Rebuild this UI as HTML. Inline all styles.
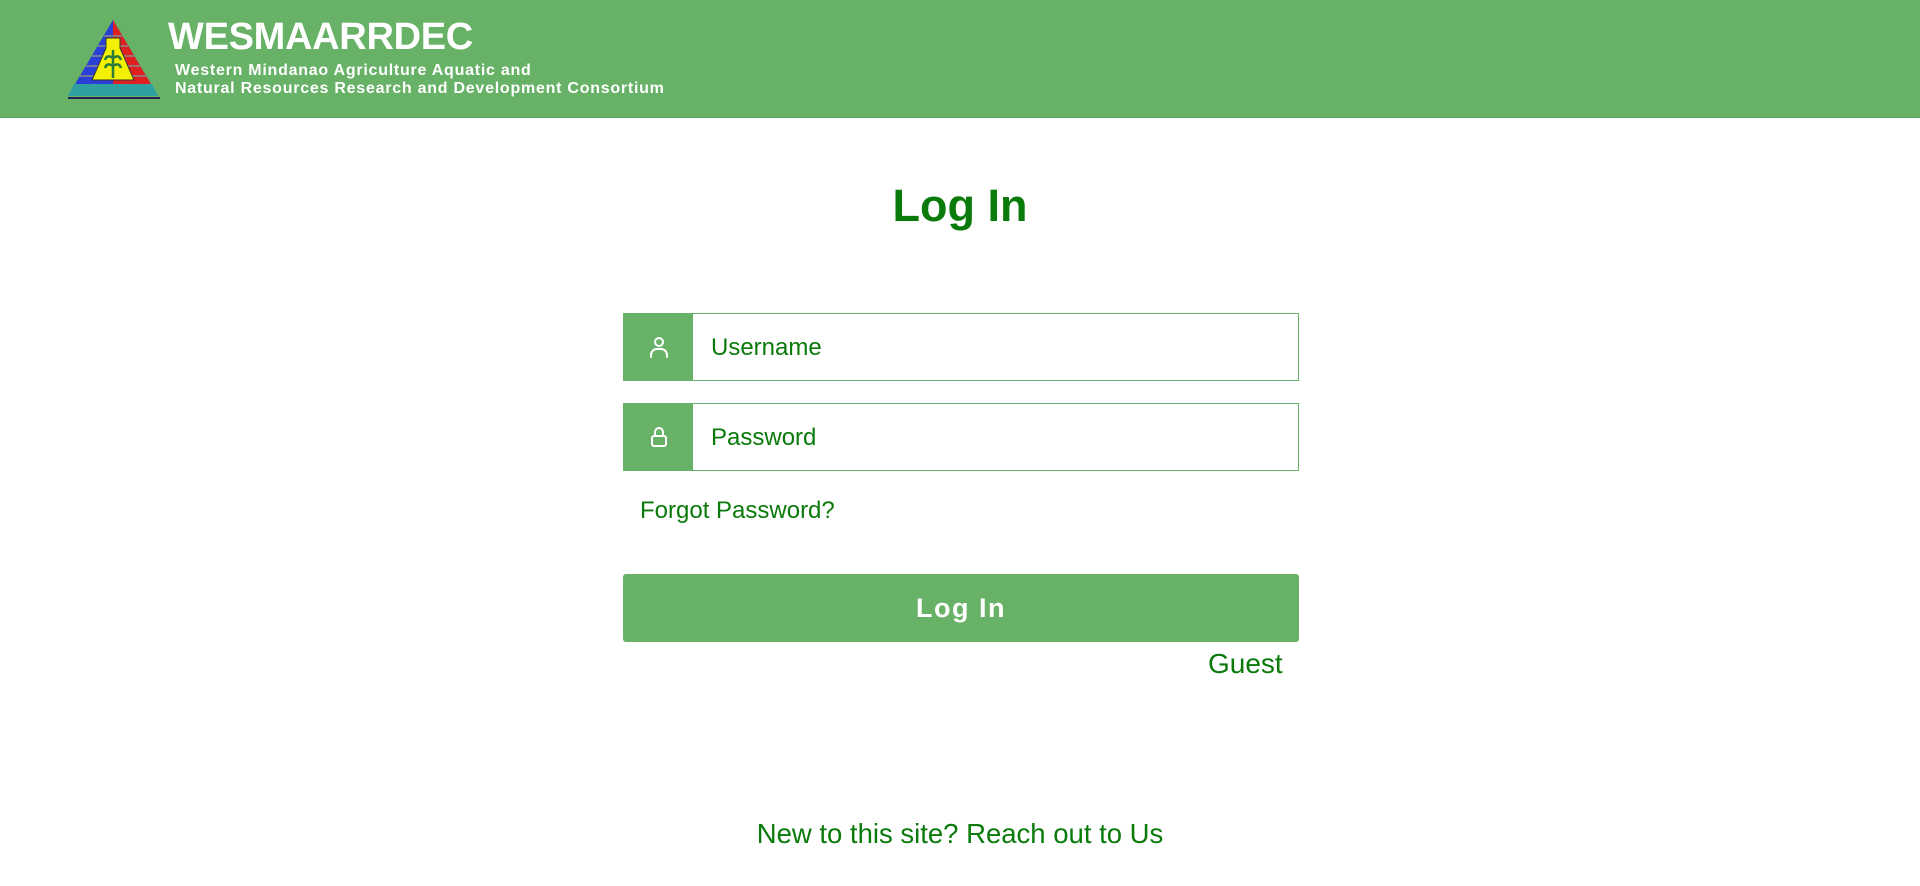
<!DOCTYPE html>
<html><head><meta charset="utf-8"><style>
body{margin:0;width:1920px;height:886px;background:#fff;font-family:"Liberation Sans",Arial,sans-serif;overflow:hidden;position:relative}
.hdr{position:absolute;left:0;top:0;width:1920px;height:117px;background:#67b267;border-bottom:1px solid #5aa55a}
.t{position:absolute;color:#fff;font-weight:bold;white-space:nowrap}
.g{color:#0a7a0a}
.inp{position:absolute;left:623px;width:674px;height:66px;border:1px solid #67b267;background:#fff}
.ico{position:absolute;left:0;top:0;width:69px;height:66px;background:#67b267}
.ph{position:absolute;left:87px;top:20px;font-size:24px;color:#0a7a0a}
</style></head><body>
<div class="hdr">
<svg style="position:absolute;left:66px;top:18px" width="96" height="82" viewBox="0 0 96 82">
<polygon points="47,2 2,78 92,78" fill="#2a3fd8"/>
<polygon points="47,2 92,78 47,78" fill="#e02020"/>
<g stroke="#8a8a8a" stroke-width="1.5">
<line x1="38" y1="18" x2="56" y2="18"/><line x1="32" y1="28" x2="62" y2="28"/><line x1="26" y1="38" x2="68" y2="38"/><line x1="20" y1="48" x2="74" y2="48"/><line x1="14" y1="58" x2="80" y2="58"/></g>
<polygon points="40,20 54,20 54,30 68,62 26,62 40,30" fill="#f3f000" stroke="#333" stroke-width="1"/>
<path d="M47,60 V32 M47,40 q-6,-4 -8,2 M47,40 q6,-4 8,2 M47,48 q-6,-4 -8,2 M47,48 q6,-4 8,2" stroke="#2a7a3a" stroke-width="2.5" fill="none"/>
<polygon points="2,78 8,66 86,66 92,78" fill="#2fa0a0"/>
<path d="M2,80 H94" stroke="#225" stroke-width="2"/>
</svg>
<div class="t" style="left:168px;top:16px;font-size:38px;letter-spacing:-0.3px">WESMAARRDEC</div>
<div class="t" style="left:175px;top:62px;font-size:16px;line-height:18px;letter-spacing:0.75px">Western Mindanao Agriculture Aquatic and<br>Natural Resources Research and Development Consortium</div>
</div>
<div class="g" style="position:absolute;left:0;width:1920px;text-align:center;top:180px;font-size:45px;font-weight:bold">Log In</div>
<div class="inp" style="top:313px"><div class="ico">
<svg style="position:absolute;left:23px;top:21px" width="24" height="24" viewBox="0 0 24 24" fill="none" stroke="#fff" stroke-width="2" stroke-linecap="round"><circle cx="12" cy="7" r="4"/><path d="M4,22 v-2 a6,6 0 0 1 6,-6 h4 a6,6 0 0 1 6,6 v2"/></svg></div>
<div class="ph">Username</div></div>
<div class="inp" style="top:403px"><div class="ico">
<svg style="position:absolute;left:23px;top:21px" width="24" height="24" viewBox="0 0 24 24" fill="none" stroke="#fff" stroke-width="2" stroke-linecap="round"><rect x="5" y="11" width="14" height="10" rx="2"/><path d="M8,11 V7 a4,4 0 0 1 8,0 V11"/></svg></div>
<div class="ph">Password</div></div>
<div class="g" style="position:absolute;left:640px;top:497px;font-size:24px">Forgot Password?</div>
<div style="position:absolute;left:623px;top:574px;width:676px;height:68px;background:#67b267;border-radius:3px;color:#fff;font-weight:bold;font-size:27px;letter-spacing:1.5px;text-align:center;line-height:68px">Log In</div>
<div class="g" style="position:absolute;left:1208px;top:648px;font-size:28px">Guest</div>
<div class="g" style="position:absolute;left:0;width:1920px;text-align:center;top:818px;font-size:27.5px">New to this site? Reach out to Us</div>
</body></html>
